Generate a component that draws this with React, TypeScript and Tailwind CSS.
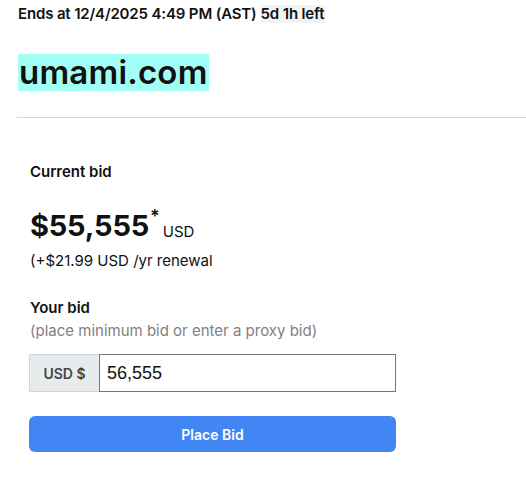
import React from 'react'

const font = { fontFamily: 'Inter, "Noto Sans", sans-serif' }

export default function App() {
  return (
    <div className="min-h-[504px] w-[526px] overflow-hidden bg-white text-[#111]" style={font}>
      <div className="pl-[18px] pt-[5px]">
        <p className="flex h-[18px] items-center text-[15px] font-semibold leading-[18px] tracking-[-0.15px]">
          <span>Ends at 12/4/2025 4:49 PM (AST)</span>
          <span className="ml-[4px] bg-[#f3f3f3] pr-[1px]">5d 1h left</span>
        </p>
        <h1 className="mt-[31px] inline-block bg-[#a3fff6] px-[1px] text-[33px] font-semibold leading-[37px] tracking-[0.2px]">
          umami.com
        </h1>
      </div>
      <div className="ml-[17px] mt-[26px] h-px bg-[#d9d9d9]" />

      <div className="flex w-[396px] flex-col pl-[30px] pt-[45px]">
        <p className="text-[15px] font-semibold leading-[18px]">Current bid</p>
        <div className="mt-[27px] flex items-end">
          <span className="text-[29px] font-bold leading-[34px] tracking-[-0.2px]">$55,555</span>
          <span className="mb-[17px] ml-[1px] text-[18px] font-semibold leading-[18px]">*</span>
          <span className="mb-[2px] ml-[3px] text-[15px] leading-[18px]">USD</span>
        </div>
        <p className="mt-[9px] text-[15px] leading-[18px]">(+$21.99 USD /yr renewal</p>

        <p className="mt-[29px] text-[15px] font-semibold leading-[18px]">Your bid</p>
        <p className="mt-[5px] text-[15px] leading-[18px] text-[#7f7f7f]">
          (place minimum bid or enter a proxy bid)
        </p>

        <div className="ml-[-1px] mt-[14px] flex h-[38px] w-[367px]">
          <span className="flex w-[70px] items-center justify-center border border-r-0 border-[#d3d6d9] bg-[#e8ebed] text-[14px] font-semibold text-[#444]">
            USD $
          </span>
          <input
            className="min-w-0 flex-1 border border-[#777] px-[7px] text-[18px] text-[#111] outline-none"
            style={{ fontFamily: '"Liberation Sans", Arial, sans-serif' }}
            defaultValue="56,555"
          />
        </div>

        <button className="ml-[-1px] mt-[24px] h-[36px] w-[367px] rounded-[6px] bg-[#4285f4] text-[14px] font-semibold text-white">
          Place Bid
        </button>
      </div>
    </div>
  )
}
